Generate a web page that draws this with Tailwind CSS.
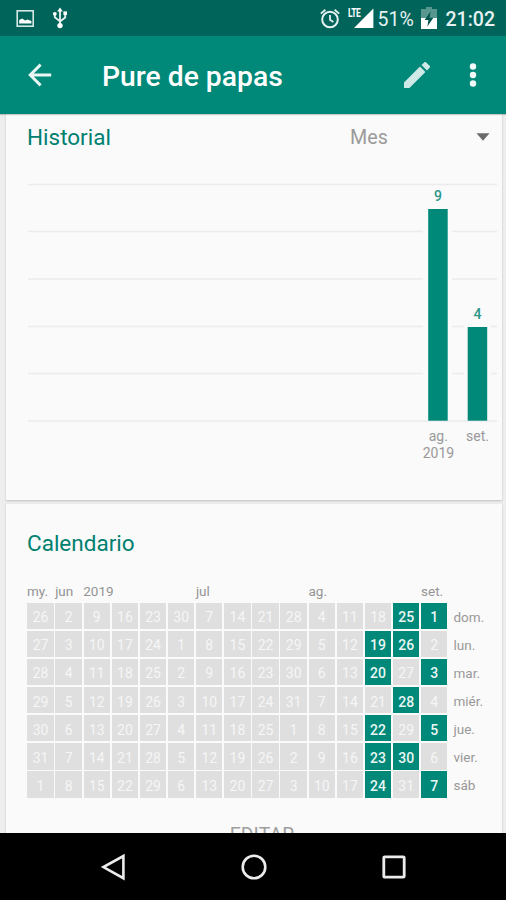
<!DOCTYPE html>
<html lang="es">
<head>
  <meta charset="UTF-8">
  <meta name="viewport" content="width=device-width, initial-scale=1.0">
  <title>Pure de papas</title>
  <script src="https://cdn.jsdelivr.net/npm/@tailwindcss/browser@4"></script>
</head>
<body class="bg-black font-[Roboto,sans-serif]">

  <div class="flex flex-col w-[506px] h-[900px] overflow-hidden bg-[#eeeeee]">

    <!-- Barra de estado -->
    <div class="flex items-center h-9 shrink-0 bg-[#00645a] text-white pl-4 pr-[11px]">
      <svg class="w-[19px] h-[19px]" viewBox="0 0 19 19">
        <rect x="1.2" y="1.8" width="16" height="15.4" fill="none" stroke="#d5e8e6" stroke-width="1.6" />
        <path d="M3.2 14.6V11l3-1.6 3 2.2 2.4-1.2 3.8 1.6v2.6z" fill="#fff" />
      </svg>
      <svg class="w-4 h-[22px] ml-[17px]" viewBox="0 0 16 22" fill="none" stroke="#e8f3f2" stroke-width="1.8">
        <path d="M8 3v15M2.8 7v3.2L8 14.4M13.2 6v4.6L8 14.4" />
        <path d="M8 .4 10.8 4.6H5.2z" fill="#fff" stroke="none" />
        <circle cx="8" cy="18.6" r="2.7" fill="#fff" stroke="none" />
        <circle cx="2.8" cy="6.8" r="1.9" fill="#fff" stroke="none" />
        <path d="M11.4 4.4h3.6v3.6h-3.6z" fill="#fff" stroke="none" />
      </svg>
      <svg class="w-5 h-[21px] ml-auto" viewBox="0 0 20 21" fill="none" stroke="#e6f2f1" stroke-width="2">
        <circle cx="10" cy="11.5" r="7.8" />
        <path d="M.8 5.6 5.4 1.8M19.2 5.6 14.6 1.8M10 7v4.8l3.4 2.2" stroke-width="1.8" />
      </svg>
      <div class="relative w-[25px] h-[22px] ml-[9px]">
        <svg class="w-[25px] h-[22px]" viewBox="0 0 25 22"><path d="M5 21 24.4 1.6V21z" fill="#fff" /></svg>
        <span class="absolute -left-px top-0 text-[12px] leading-[12px] font-bold tracking-[-0.5px] origin-left scale-x-[.7]">LTE</span>
      </div>
      <span class="ml-[4px] text-[19.5px] leading-6 text-[#e6f2f1] w-[38px] pt-[3px]">51%</span>
      <svg class="w-4 h-[23px] ml-[5px] -mt-px" viewBox="0 0 16 23">
        <path d="M5 1h6v2h5v20H0V3h5z" fill="#58978f" />
        <path d="M0 12h16v11H0z" fill="#fff" />
        <path d="M9.6 5.5 3.6 14h3.8l-1 6.5 6-8.8H8.6z" fill="#00564d" />
      </svg>
      <span class="ml-[9px] text-[19.5px] leading-6 font-medium text-[#e6f2f1] pt-[3px] whitespace-nowrap">21:02</span>
    </div>

    <!-- Barra de la app -->
    <div class="relative z-10 flex items-center h-[78px] shrink-0 bg-[#008979] text-white pl-7 pr-[29px] shadow-[0_1px_1px_rgba(0,0,0,0.2)]">
      <svg class="w-6 h-6" viewBox="0 0 24 24" fill="none" stroke="#e9f6f4" stroke-width="2.9">
        <path d="M23.2 12H2.6M12.6 1.6 2.2 12l10.4 10.4" />
      </svg>
      <h1 class="ml-[50px] pt-[3px] text-[28.3px] leading-9 font-medium whitespace-nowrap">Pure de papas</h1>
      <svg class="w-[26px] h-[26px] ml-auto" viewBox="3 3 18 18" fill="#cfeae6">
        <path d="M3 17.25V21h3.75L17.81 9.94l-3.75-3.75L3 17.25zM20.71 7.04a1 1 0 0 0 0-1.41l-2.34-2.34a1 1 0 0 0-1.41 0l-1.83 1.83 3.75 3.75 1.83-1.83z" />
      </svg>
      <svg class="w-2 h-6 ml-[39px]" viewBox="0 0 8 24" fill="#f2faf9">
        <circle cx="4" cy="3.5" r="3.2" />
        <circle cx="4" cy="12" r="3.2" />
        <circle cx="4" cy="20.5" r="3.2" />
      </svg>
    </div>

    <div class="flex flex-col flex-1 min-h-0 gap-1 pl-1.5 pr-1 overflow-hidden">

      <!-- Historial -->
      <section class="h-[386px] shrink-0 bg-[#fafafa] shadow-[0_1px_2px_rgba(0,0,0,0.2)]">
        <div class="flex items-center h-[46px] pt-[2px] pl-[21px] pr-[12px]">
          <h2 class="w-[323px] text-[22.5px] text-[#00806f]">Historial</h2>
          <span class="text-[19.7px] text-[#9a9a9a]">Mes</span>
          <svg class="w-[14px] h-2 ml-auto -mt-[3px]" viewBox="0 0 15 8"><path d="M.5 0h14l-7 8z" fill="#6b6b6b" /></svg>
        </div>
        <svg class="w-[496px] h-[320px]" viewBox="6 160 496 320" text-anchor="middle">
          <path d="M28 184.5H497M28 231.5H497M28 279H497M28 326.5H497M28 373.5H497M28 421H497" stroke="#ececec" stroke-width="1.5" />
          <g fill="#fafafa">
            <rect x="423" y="187" width="29" height="233" />
            <rect x="464" y="305" width="27" height="115" />
          </g>
          <g fill="#008979">
            <rect x="428.2" y="209" width="19.5" height="211.7" />
            <rect x="467.7" y="327" width="19.5" height="93.7" />
          </g>
          <g class="text-[14px] font-medium" fill="#2b9686">
            <text x="438" y="200.5">9</text>
            <text x="477.5" y="318.5">4</text>
          </g>
          <g class="text-[14px]" fill="#999999">
            <text x="438.3" y="441">ag.</text>
            <text x="438.5" y="457.5">2019</text>
            <text x="477.5" y="441">set.</text>
          </g>
        </svg>
      </section>

      <!-- Calendario -->
      <section class="h-[400px] shrink-0 bg-[#fafafa] pl-[21px] pt-[22px] shadow-[0_1px_2px_rgba(0,0,0,0.2)]">
        <h2 class="text-[22.5px] leading-[34px] text-[#00806f]">Calendario</h2>
        <div class="flex mt-[22px] h-[19px] items-end text-[13.5px] leading-[19px] text-[#949494] whitespace-nowrap">
          <span class="w-[28.15px]">my.</span>
          <span class="w-[28.15px]">jun</span>
          <span class="w-[112.6px]">2019</span>
          <span class="w-[112.6px]">jul</span>
          <span class="w-[112.6px]">ag.</span>
          <span>set.</span>
        </div>
        <div class="flex mt-[1.5px] ml-[0.3px]">
          <div id="dias" class="grid grid-flow-col grid-rows-[repeat(7,26.45px)] auto-cols-[26.45px] gap-[1.7px]"></div>
          <div class="grid grid-rows-[repeat(7,26.45px)] gap-[1.7px] ml-[6px] items-center pt-px text-[13.5px] text-[#999999]">
            <span>dom.</span>
            <span>lun.</span>
            <span>mar.</span>
            <span>miér.</span>
            <span>jue.</span>
            <span>vier.</span>
            <span>sáb</span>
          </div>
        </div>
        <div class="mt-[25px] pr-[5px] text-center text-[19.5px] leading-6 text-[#9e9e9e]">EDITAR</div>
      </section>
    </div>

    <!-- Botones de navegación -->
    <div class="relative flex items-center justify-center h-[67px] shrink-0 bg-black">
      <svg class="w-[26px] h-[28px]" viewBox="0 0 26 28" fill="none" stroke="#ececec" stroke-width="2.6">
        <path d="M23.4 3v22.2L3.4 14.1z" />
      </svg>
      <svg class="w-[26px] h-[26px] ml-[115px]" viewBox="0 0 26 26" fill="none" stroke="#ececec" stroke-width="2.6">
        <circle cx="13" cy="13" r="11.3" />
      </svg>
      <svg class="w-6 h-6 ml-[115px]" viewBox="0 0 24 24" fill="none" stroke="#ececec" stroke-width="2.8">
        <rect x="1.8" y="1.8" width="20.4" height="20.4" rx="1" />
      </svg>
    </div>
  </div>

  <script>
    // Días cumplidos, como mes-día
    const cumplidos = ['8-19', '8-20', '8-22', '8-23', '8-24', '8-25', '8-26', '8-28', '8-30', '9-1', '9-3', '9-5', '9-7'];
    const dias = document.getElementById('dias');

    // 15 semanas a partir del domingo 26 de mayo
    for (let i = 0; i < 15 * 7; i++) {
      const fecha = new Date(2019, 4, 26 + i);
      const celda = document.createElement('div');
      const hecho = cumplidos.includes((fecha.getMonth() + 1) + '-' + fecha.getDate());
      celda.className = hecho
        ? 'flex items-center justify-center pt-[3px] text-[14px] leading-none font-medium bg-[#008979] text-[#e9f6f4]'
        : 'flex items-center justify-center pt-[3px] text-[14px] leading-none bg-[#dfdfdf] text-[#f6f6f6]';
      celda.textContent = fecha.getDate();
      dias.appendChild(celda);
    }
  </script>
</body>
</html>
